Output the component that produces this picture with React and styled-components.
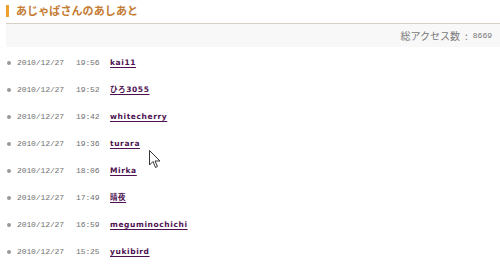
import React from "react";
import styled, { createGlobalStyle } from "styled-components";

const Global = createGlobalStyle`
  html, body { margin: 0; padding: 0; background: #fff; }
  body { font-family: "Noto Sans CJK JP", "DejaVu Sans", sans-serif; overflow: hidden; }
`;

const Page = styled.div`
  width: 500px;
  height: 270px;
  position: relative;
  padding: 0 0 0 6px;
  box-sizing: border-box;
`;

const TitleBar = styled.div`
  display: flex;
  align-items: center;
  height: 24px;
  border-bottom: 1px solid #d6d0c4;
  box-sizing: border-box;
  padding-bottom: 2px;
`;

const Accent = styled.span`
  width: 3px;
  height: 12px;
  background: #f0a22e;
  margin-right: 7px;
`;

const Title = styled.h1`
  margin: 0;
  font-size: 11px;
  font-weight: bold;
  color: #c47b33;
  letter-spacing: 0.1px;
  line-height: 1;
`;

const CountBox = styled.div`
  height: 23px;
  background: #f8f8f8;
  display: flex;
  align-items: center;
  justify-content: flex-end;
  gap: 5px;
  padding-right: 8px;
  font-size: 10px;
  color: #777;
`;

const Num = styled.span`
  font-family: "Liberation Mono", monospace;
  font-size: 8px;
`;

const List = styled.ul`
  list-style: none;
  margin: 0;
  padding: 2px 0 0 0;
`;

const Row = styled.li`
  display: flex;
  align-items: center;
  height: 27px;
`;

const Dot = styled.span`
  width: 4px;
  height: 4px;
  border-radius: 50%;
  background: #9a9a9a;
  margin: 0 6px 0 1px;
`;

const Stamp = styled.span`
  font-family: "Liberation Mono", monospace;
  font-size: 8px;
  letter-spacing: -0.1px;
  color: #707070;
  width: ${(p) => p.$w}px;
`;

const Name = styled.a`
  font-family: "DejaVu Sans", "Noto Sans CJK JP", sans-serif;
  font-size: 7.5px;
  font-weight: bold;
  letter-spacing: 0.6px;
  color: #4d1050;
  text-decoration: underline;
  text-decoration-thickness: 1px;
  text-underline-offset: 2px;
  line-height: 1;
`;

const Cursor = styled.svg`
  position: absolute;
  left: 149px;
  top: 150px;
`;

const rows = [
  ["19:56", "kai11"],
  ["19:52", "ひろ3055"],
  ["19:42", "whitecherry"],
  ["19:36", "turara"],
  ["18:06", "Mirka"],
  ["17:49", "晴夜"],
  ["16:59", "meguminochichi"],
  ["15:25", "yukibird"],
];

export default function App() {
  return (
    <Page>
      <Global />
      <TitleBar>
        <Accent />
        <Title>あじゃぱさんのあしあと</Title>
      </TitleBar>
      <CountBox>
        <span>総アクセス数</span>
        <span>:</span>
        <Num>8669</Num>
      </CountBox>
      <List>
        {rows.map(([t, n]) => (
          <Row key={n}>
            <Dot />
            <Stamp $w={59}>2010/12/27</Stamp>
            <Stamp $w={34}>{t}</Stamp>
            <Name href="#">{n}</Name>
          </Row>
        ))}
      </List>
      <Cursor width="12" height="19" viewBox="0 0 12 19">
        <path d="M0.5 0.5 L0.5 15 L4 11.5 L6.5 17.5 L8.5 16.5 L6 11 L11 11 Z" fill="#fff" stroke="#333" strokeWidth="1" />
      </Cursor>
    </Page>
  );
}
